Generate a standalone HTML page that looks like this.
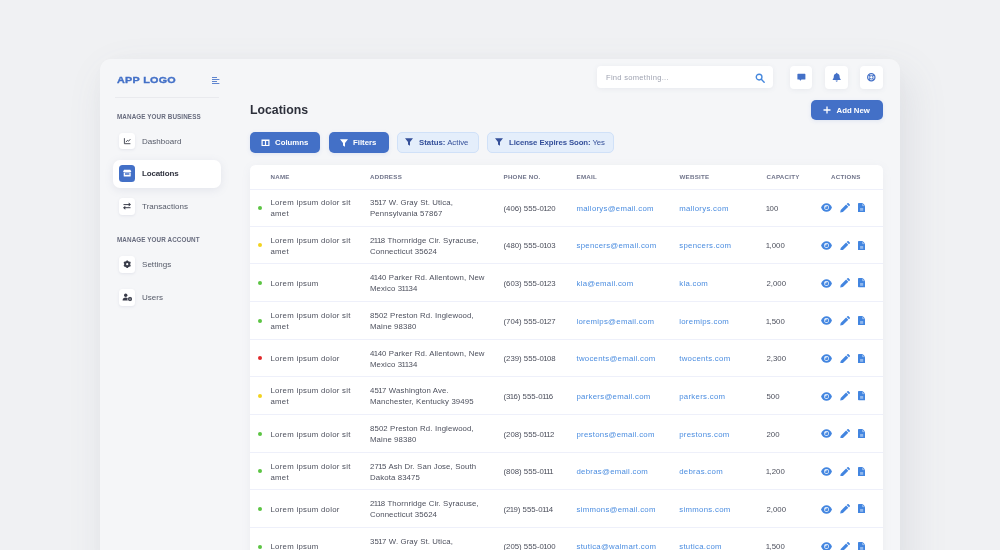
<!DOCTYPE html>
<html lang="en">
<head>
<meta charset="utf-8">
<title>Locations</title>
<style>
*{box-sizing:border-box;margin:0;padding:0}
html,body{width:1000px;height:550px;overflow:hidden}
body{background:#f0f1f3;font-family:"Liberation Sans",sans-serif;color:#3a3d4a;position:relative}
#root{position:absolute;left:0;top:0;width:1000px;height:550px;will-change:transform}
.k{margin:0 -.65px}
.app{position:absolute;left:100px;top:59px;width:800px;height:520px;background:#f5f6f8;border-radius:11px;box-shadow:8px 16px 40px rgba(100,110,135,.13),0 0 26px rgba(100,110,135,.022)}
/* sidebar */
.logo{position:absolute;left:117px;top:74px;font-weight:700;font-size:9.3px;line-height:12px;color:#4370c7;letter-spacing:.25px;white-space:nowrap;transform:scaleX(1.16);transform-origin:0 50%;-webkit-text-stroke:.35px #4370c7}
.burger{position:absolute;left:212px;top:77px;width:8px;height:8px}
.sdiv{position:absolute;left:115px;top:97px;width:104px;height:1px;background:#e9eaee}
.sec{position:absolute;left:117px;font-size:6.3px;font-weight:700;color:#686c7e;letter-spacing:.1px;line-height:8px;white-space:nowrap}
.nav{position:absolute;left:113px;width:108px;height:28px}
.nav.active{background:#fff;border-radius:7px;box-shadow:0 2px 8px rgba(120,130,160,.14)}
.nav .ib{position:absolute;left:5.8px;top:6px;width:16.4px;height:16.4px;border-radius:3.5px;background:#fff;box-shadow:0 1px 3px rgba(120,130,160,.14)}
.nav.active .ib{background:#4370c7;box-shadow:none;top:5.4px}
.nav .ib svg{position:absolute;left:0;top:0;width:16px;height:16px}
.nav .lb{position:absolute;left:29px;top:10px;letter-spacing:.04px;font-size:8px;line-height:10px;color:#555a68;white-space:nowrap}
.nav.active .lb{font-weight:700;color:#30333f;top:9px;letter-spacing:-.15px}
/* topbar */
.search{position:absolute;left:597.3px;top:66.2px;width:175.7px;height:22.3px;background:#fff;border-radius:4px;box-shadow:0 1px 5px rgba(120,130,160,.10)}
.search span{position:absolute;left:8.7px;top:6.6px;font-size:7.6px;line-height:10px;color:#a0a4b2;white-space:nowrap;letter-spacing:.27px}
.search svg{position:absolute;left:157.5px;top:6.5px;width:10.5px;height:10.5px}
.tb{position:absolute;top:66px;width:22px;height:22.5px;background:#fff;border-radius:4px;box-shadow:0 1px 5px rgba(120,130,160,.10)}
.tb svg{position:absolute;left:0;top:0;width:22px;height:23px}
h1{position:absolute;left:250px;top:102px;font-size:12.3px;line-height:16px;font-weight:700;color:#2d303b;white-space:nowrap}
.btn{position:absolute;height:20px;border-radius:5px;background:#4370c7;color:#fff;font-weight:700;font-size:7.8px;line-height:10px;white-space:nowrap;box-shadow:0 1px 4px rgba(63,108,195,.12)}
.btn span{position:absolute;top:6.4px}
.btn svg{position:absolute}
.chip{position:absolute;top:132px;height:20.7px;border-radius:5px;background:#e4eefb;border:1px solid #d0e1f8;color:#35509a;font-size:7.8px;line-height:10px;white-space:nowrap}
.chip span{position:absolute;top:4.5px}
.chip b{font-weight:700}
.chip svg{position:absolute}
/* table */
.card{position:absolute;left:250px;top:165px;width:633.2px;height:420px;background:#fff;border-radius:5.5px;box-shadow:0 2px 10px rgba(120,130,160,.08);overflow:hidden}
.th{position:absolute;top:7.7px;font-size:6.2px;line-height:8px;font-weight:700;color:#70748a;letter-spacing:.25px;white-space:nowrap}
.hl{position:absolute;left:0;width:633px;height:1px;background:#eef0fa}
.row{position:absolute;left:0;width:633px;height:37.67px;font-size:7.8px;line-height:11px;color:#4d505d}
.row .dot{position:absolute;left:8px;top:17.6px;width:4px;height:4px;border-radius:50%}
.g{background:#5bc443}.y{background:#f2d21f}.r{background:#e0292b}
.c{position:absolute;white-space:nowrap}
.c.one{top:14.5px}
.c.two{top:9px}
.c.a{color:#4b8de0}
.nm{letter-spacing:.27px}.ad{letter-spacing:.12px}.ph{letter-spacing:0}.em{letter-spacing:.27px}.wb{letter-spacing:.3px}
.row svg{position:absolute}
.eye{left:571px;top:15.3px;width:11px;height:9px}
.pen{left:589.8px;top:14.9px;width:10.2px;height:9.6px}
.doc{left:607.8px;top:14.9px;width:7.3px;height:9.3px}
</style>
</head>
<body>
<div id="root">
<div class="app"></div>

<!-- sidebar -->
<div class="logo">APP LOGO</div>
<svg class="burger" viewBox="0 0 8 8"><g stroke="#4370c7" stroke-width=".85" fill="none"><path d="M0 .5h5M0 2.500h7.400M0 4.500h5M0 6.500h7.400"/></g></svg>
<div class="sdiv"></div>
<div class="sec" style="top:112.6px">MANAGE YOUR BUSINESS</div>

<div class="nav" style="top:127px"><div class="ib"><svg viewBox="0 0 16 16"><path d="M5.400 5.200v5.500h6" stroke="#3a3d4a" stroke-width=".9" fill="none"/><path d="M6.900 9.100l1.500-1.700 1.200.8 1.700-2" stroke="#3a3d4a" stroke-width=".9" fill="none"/></svg></div><div class="lb">Dashboard</div></div>
<div class="nav active" style="top:160px"><div class="ib"><svg viewBox="0 0 16 16"><path d="M5 4.700h6.400l1 2.200H4z" fill="#fff"/><path d="M4.700 7.400h7v3.500a.6.600 0 0 1-.6.600H5.300a.6.600 0 0 1-.6-.6zM6 8.300v1.400h4.400V8.300z" fill="#fff" fill-rule="evenodd"/></svg></div><div class="lb">Locations</div></div>
<div class="nav" style="top:192.3px"><div class="ib"><svg viewBox="0 0 16 16"><g stroke="#3a3d4a" stroke-width="1" fill="none"><path d="M4.500 6.600h6M11.500 9.700h-6"/></g><path d="M9.700 4.600l2.300 2-2.300 2zM6.300 7.700l-2.300 2 2.300 2z" fill="#3a3d4a"/></svg></div><div class="lb">Transactions</div></div>

<div class="sec" style="top:236px">MANAGE YOUR ACCOUNT</div>
<div class="nav" style="top:250.2px"><div class="ib"><svg viewBox="0 0 16 16"><circle cx="8.200" cy="8.200" r="2.200" stroke="#3a3d4a" stroke-width="1.800" fill="none"/><g stroke="#3a3d4a" stroke-width="1.600"><path d="M8.200 4.400v7.600M4.900 6.300l6.600 3.800M4.900 10.100l6.600-3.800"/></g><circle cx="8.200" cy="8.200" r="1.100" fill="#fff"/></svg></div><div class="lb">Settings</div></div>
<div class="nav" style="top:283.4px"><div class="ib"><svg viewBox="0 0 16 16"><circle cx="6.700" cy="6.300" r="1.700" fill="#3a3d4a"/><path d="M3.600 11.400c0-1.900 1.300-2.800 3.100-2.800.9 0 1.600.2 2.100.7-.5.900-.4 1.600 0 2.100z" fill="#3a3d4a"/><circle cx="11" cy="10" r="1.350" stroke="#3a3d4a" stroke-width="1.300" fill="#fff"/><path d="M11 7.900v4.200M9.200 9l3.600 2M9.200 11l3.600-2" stroke="#3a3d4a" stroke-width=".7"/><circle cx="11" cy="10" r=".55" fill="#fff"/></svg></div><div class="lb">Users</div></div>

<!-- topbar -->
<div class="search"><span>Find something...</span><svg viewBox="0 0 11 11"><circle cx="4.300" cy="4.300" r="3" stroke="#4587dd" stroke-width="1.400" fill="none"/><path d="M6.600 6.600l3 3" stroke="#4587dd" stroke-width="1.500" stroke-linecap="round"/></svg></div>
<div class="tb" style="left:789.6px;width:22.7px"><svg viewBox="0 0 22 23"><path d="M8 7.800h6.800a.6.600 0 0 1 .6.600v4.600a.6.600 0 0 1-.6.600h-3.300l-1.200 1.200-.9-1.200H8a.6.600 0 0 1-.6-.6V8.400a.6.600 0 0 1 .6-.6z" fill="#4370c7"/></svg></div>
<div class="tb" style="left:824.8px;width:22.8px"><svg viewBox="0 0 22 23"><path d="M11.700 6.800c.4 0 .6.300.6.700 1.500.3 2.300 1.500 2.300 3 0 1.600.5 2.300 1 2.800.3.300.1.800-.3.800H8.100c-.4 0-.6-.5-.3-.8.500-.5 1-1.200 1-2.800 0-1.500.8-2.700 2.300-3 0-.4.200-.7.600-.7z" fill="#4370c7"/><path d="M10.600 14.600h2.200a1.100 1.100 0 0 1-2.200 0z" fill="#4370c7"/></svg></div>
<div class="tb" style="left:860.4px;width:22.6px"><svg viewBox="0 0 22 23"><circle cx="11.300" cy="11.300" r="3.650" stroke="#4370c7" stroke-width="1.200" fill="none"/><circle cx="11.300" cy="11.300" r="1.700" stroke="#4370c7" stroke-width=".9" fill="none"/><path d="M8.700 8.700l1.400 1.400M13.900 8.700l-1.400 1.400M8.700 13.900l1.400-1.400M13.900 13.900l-1.400-1.400" stroke="#4370c7" stroke-width="1.300"/></svg></div>

<h1>Locations</h1>
<div class="btn" style="left:811px;top:100px;width:72px"><svg style="left:12px;top:6px;width:8px;height:8px" viewBox="0 0 8 8"><path d="M4 .5v7M.5 4h7" stroke="#fff" stroke-width="1.300"/></svg><span style="left:25.500px;top:6.3px">Add New</span></div>

<div class="btn" style="left:250px;top:132px;width:70px;height:20.7px"><svg style="left:11px;top:6.5px;width:9px;height:7.5px" viewBox="0 0 9 8" preserveAspectRatio="none"><path d="M.5.500h8v7h-8zM1.700 2v4.300h2.200V2zM5.100 2v4.300h2.200V2z" fill="#fff" fill-rule="evenodd"/></svg><span style="left:25px">Columns</span></div>
<div class="btn" style="left:329px;top:132px;width:59.500px;height:20.7px"><svg style="left:11px;top:6.700px;width:8px;height:8px" viewBox="0 0 8 8"><path d="M0 .3h8L5 4v3.700L3 6.500V4z" fill="#fff"/></svg><span style="left:24px">Filters</span></div>
<div class="chip" style="left:397px;width:82px"><svg style="left:7px;top:5px;width:8px;height:8px" viewBox="0 0 8 8"><path d="M0 .3h8L5 4v3.700L3 6.500V4z" fill="#35509a"/></svg><span style="left:21px"><b>Status:</b> Active</span></div>
<div class="chip" style="left:487px;width:127px"><svg style="left:7px;top:5px;width:8px;height:8px" viewBox="0 0 8 8"><path d="M0 .3h8L5 4v3.700L3 6.500V4z" fill="#35509a"/></svg><span style="left:21px;letter-spacing:-.1px"><b>License Expires Soon:</b> Yes</span></div>

<!-- table -->
<div class="card" id="card">
<div class="th" style="left:20.500px">NAME</div>
<div class="th" style="left:120px">ADDRESS</div>
<div class="th" style="left:253.500px">PHONE NO.</div>
<div class="th" style="left:326.500px">EMAIL</div>
<div class="th" style="left:429.500px">WEBSITE</div>
<div class="th" style="left:516.500px">CAPACITY</div>
<div class="th" style="left:581px">ACTIONS</div>
<div class="hl" style="top:24.00px"></div>
<div class="row" style="top:23.10px"><i class="dot g"></i><div class="c nm two" style="left:20.5px">Lorem ipsum dolor sit<br>amet</div><div class="c ad two" style="left:120px">35<span class="k">1</span>7 W. Gray St. Utica,<br>Pennsylvania 57867</div><div class="c ph one" style="left:253.5px">(406) 555-0<span class="k">1</span>20</div><div class="c a em one" style="left:326.5px">mallorys@email.com</div><div class="c a wb one" style="left:429.2px">mallorys.com</div><div class="c cp one" style="left:516.5px"><span class="k">1</span>00</div><svg class="eye" viewBox="0 0 11 9"><path d="M5.500.15C3 .15 1 1.900.05 4.500 1 7.100 3 8.850 5.500 8.850S10 7.100 10.950 4.500C10 1.900 8 .15 5.500.15z" fill="#4285e0"/><circle cx="5.500" cy="4.500" r="2.450" fill="#fff"/><circle cx="5.500" cy="4.500" r="1.750" fill="#4285e0"/><circle cx="4.850" cy="3.800" r=".8" fill="#fff"/></svg><svg class="pen" viewBox="0 0 10.200 9.600"><path d="M.2 9.500l.5-2.600 5.400-5.400 2.200 2.200-5.400 5.400zM6.700 1l.8-.8c.3-.3.800-.3 1.100 0l1.200 1.200c.3.300.3.800 0 1.100l-.8.800z" fill="#4285e0"/></svg><svg class="doc" viewBox="0 0 7.300 9.300"><path d="M.8 0h3.800l2.700 2.700v5.800a.8.800 0 0 1-.8.800H.8a.8.800 0 0 1-.8-.8V.8A.8.800 0 0 1 .8 0z" fill="#4285e0"/><path d="M4.650.5v2.150H6.800" stroke="#fff" stroke-width=".55" fill="none" opacity=".85"/><rect x="2.100" y="5" width="3.100" height="2.800" fill="#fff" opacity=".42"/></svg></div>
<div class="hl" style="top:60.75px"></div>
<div class="row" style="top:60.75px"><i class="dot y"></i><div class="c nm two" style="left:20.5px">Lorem ipsum dolor sit<br>amet</div><div class="c ad two" style="left:120px">2<span class="k">1</span><span class="k">1</span>8 Thornridge Cir. Syracuse,<br>Connecticut 35624</div><div class="c ph one" style="left:253.5px">(480) 555-0<span class="k">1</span>03</div><div class="c a em one" style="left:326.5px">spencers@email.com</div><div class="c a wb one" style="left:429.2px">spencers.com</div><div class="c cp one" style="left:516.5px"><span class="k">1</span>,000</div><svg class="eye" viewBox="0 0 11 9"><path d="M5.500.15C3 .15 1 1.900.05 4.500 1 7.100 3 8.850 5.500 8.850S10 7.100 10.950 4.500C10 1.900 8 .15 5.500.15z" fill="#4285e0"/><circle cx="5.500" cy="4.500" r="2.450" fill="#fff"/><circle cx="5.500" cy="4.500" r="1.750" fill="#4285e0"/><circle cx="4.850" cy="3.800" r=".8" fill="#fff"/></svg><svg class="pen" viewBox="0 0 10.200 9.600"><path d="M.2 9.500l.5-2.600 5.400-5.400 2.200 2.200-5.400 5.400zM6.700 1l.8-.8c.3-.3.800-.3 1.100 0l1.200 1.200c.3.300.3.800 0 1.100l-.8.800z" fill="#4285e0"/></svg><svg class="doc" viewBox="0 0 7.300 9.300"><path d="M.8 0h3.800l2.700 2.700v5.800a.8.800 0 0 1-.8.800H.8a.8.800 0 0 1-.8-.8V.8A.8.800 0 0 1 .8 0z" fill="#4285e0"/><path d="M4.650.5v2.150H6.800" stroke="#fff" stroke-width=".55" fill="none" opacity=".85"/><rect x="2.100" y="5" width="3.100" height="2.800" fill="#fff" opacity=".42"/></svg></div>
<div class="hl" style="top:98.40px"></div>
<div class="row" style="top:98.40px"><i class="dot g"></i><div class="c nm one" style="left:20.5px">Lorem ipsum</div><div class="c ad two" style="left:120px">4<span class="k">1</span>40 Parker Rd. Allentown, New<br>Mexico 3<span class="k">1</span><span class="k">1</span>34</div><div class="c ph one" style="left:253.5px">(603) 555-0<span class="k">1</span>23</div><div class="c a em one" style="left:326.5px">kla@email.com</div><div class="c a wb one" style="left:429.2px">kla.com</div><div class="c cp one" style="left:516.5px">2,000</div><svg class="eye" viewBox="0 0 11 9"><path d="M5.500.15C3 .15 1 1.900.05 4.500 1 7.100 3 8.850 5.500 8.850S10 7.100 10.950 4.500C10 1.900 8 .15 5.500.15z" fill="#4285e0"/><circle cx="5.500" cy="4.500" r="2.450" fill="#fff"/><circle cx="5.500" cy="4.500" r="1.750" fill="#4285e0"/><circle cx="4.850" cy="3.800" r=".8" fill="#fff"/></svg><svg class="pen" viewBox="0 0 10.200 9.600"><path d="M.2 9.500l.5-2.600 5.400-5.400 2.200 2.200-5.400 5.400zM6.700 1l.8-.8c.3-.3.800-.3 1.100 0l1.200 1.200c.3.300.3.800 0 1.100l-.8.800z" fill="#4285e0"/></svg><svg class="doc" viewBox="0 0 7.300 9.300"><path d="M.8 0h3.800l2.700 2.700v5.800a.8.800 0 0 1-.8.800H.8a.8.800 0 0 1-.8-.8V.8A.8.800 0 0 1 .8 0z" fill="#4285e0"/><path d="M4.650.5v2.150H6.800" stroke="#fff" stroke-width=".55" fill="none" opacity=".85"/><rect x="2.100" y="5" width="3.100" height="2.800" fill="#fff" opacity=".42"/></svg></div>
<div class="hl" style="top:136.05px"></div>
<div class="row" style="top:136.05px"><i class="dot g"></i><div class="c nm two" style="left:20.5px">Lorem ipsum dolor sit<br>amet</div><div class="c ad two" style="left:120px">8502 Preston Rd. Inglewood,<br>Maine 98380</div><div class="c ph one" style="left:253.5px">(704) 555-0<span class="k">1</span>27</div><div class="c a em one" style="left:326.5px">loremips@email.com</div><div class="c a wb one" style="left:429.2px">loremips.com</div><div class="c cp one" style="left:516.5px"><span class="k">1</span>,500</div><svg class="eye" viewBox="0 0 11 9"><path d="M5.500.15C3 .15 1 1.900.05 4.500 1 7.100 3 8.850 5.500 8.850S10 7.100 10.950 4.500C10 1.900 8 .15 5.500.15z" fill="#4285e0"/><circle cx="5.500" cy="4.500" r="2.450" fill="#fff"/><circle cx="5.500" cy="4.500" r="1.750" fill="#4285e0"/><circle cx="4.850" cy="3.800" r=".8" fill="#fff"/></svg><svg class="pen" viewBox="0 0 10.200 9.600"><path d="M.2 9.500l.5-2.600 5.400-5.400 2.200 2.200-5.400 5.400zM6.700 1l.8-.8c.3-.3.800-.3 1.100 0l1.200 1.200c.3.300.3.800 0 1.100l-.8.800z" fill="#4285e0"/></svg><svg class="doc" viewBox="0 0 7.300 9.300"><path d="M.8 0h3.800l2.700 2.700v5.800a.8.800 0 0 1-.8.800H.8a.8.800 0 0 1-.8-.8V.8A.8.800 0 0 1 .8 0z" fill="#4285e0"/><path d="M4.650.5v2.150H6.800" stroke="#fff" stroke-width=".55" fill="none" opacity=".85"/><rect x="2.100" y="5" width="3.100" height="2.800" fill="#fff" opacity=".42"/></svg></div>
<div class="hl" style="top:173.70px"></div>
<div class="row" style="top:173.70px"><i class="dot r"></i><div class="c nm one" style="left:20.5px">Lorem ipsum dolor</div><div class="c ad two" style="left:120px">4<span class="k">1</span>40 Parker Rd. Allentown, New<br>Mexico 3<span class="k">1</span><span class="k">1</span>34</div><div class="c ph one" style="left:253.5px">(239) 555-0<span class="k">1</span>08</div><div class="c a em one" style="left:326.5px">twocents@email.com</div><div class="c a wb one" style="left:429.2px">twocents.com</div><div class="c cp one" style="left:516.5px">2,300</div><svg class="eye" viewBox="0 0 11 9"><path d="M5.500.15C3 .15 1 1.900.05 4.500 1 7.100 3 8.850 5.500 8.850S10 7.100 10.950 4.500C10 1.900 8 .15 5.500.15z" fill="#4285e0"/><circle cx="5.500" cy="4.500" r="2.450" fill="#fff"/><circle cx="5.500" cy="4.500" r="1.750" fill="#4285e0"/><circle cx="4.850" cy="3.800" r=".8" fill="#fff"/></svg><svg class="pen" viewBox="0 0 10.200 9.600"><path d="M.2 9.500l.5-2.600 5.400-5.400 2.200 2.200-5.400 5.400zM6.700 1l.8-.8c.3-.3.800-.3 1.100 0l1.200 1.200c.3.300.3.800 0 1.100l-.8.800z" fill="#4285e0"/></svg><svg class="doc" viewBox="0 0 7.300 9.300"><path d="M.8 0h3.800l2.700 2.700v5.800a.8.800 0 0 1-.8.800H.8a.8.800 0 0 1-.8-.8V.8A.8.800 0 0 1 .8 0z" fill="#4285e0"/><path d="M4.650.5v2.150H6.800" stroke="#fff" stroke-width=".55" fill="none" opacity=".85"/><rect x="2.100" y="5" width="3.100" height="2.800" fill="#fff" opacity=".42"/></svg></div>
<div class="hl" style="top:211.35px"></div>
<div class="row" style="top:211.35px"><i class="dot y"></i><div class="c nm two" style="left:20.5px">Lorem ipsum dolor sit<br>amet</div><div class="c ad two" style="left:120px">45<span class="k">1</span>7 Washington Ave.<br>Manchester, Kentucky 39495</div><div class="c ph one" style="left:253.5px">(3<span class="k">1</span>6) 555-0<span class="k">1</span><span class="k">1</span>6</div><div class="c a em one" style="left:326.5px">parkers@email.com</div><div class="c a wb one" style="left:429.2px">parkers.com</div><div class="c cp one" style="left:516.5px">500</div><svg class="eye" viewBox="0 0 11 9"><path d="M5.500.15C3 .15 1 1.900.05 4.500 1 7.100 3 8.850 5.500 8.850S10 7.100 10.950 4.500C10 1.900 8 .15 5.500.15z" fill="#4285e0"/><circle cx="5.500" cy="4.500" r="2.450" fill="#fff"/><circle cx="5.500" cy="4.500" r="1.750" fill="#4285e0"/><circle cx="4.850" cy="3.800" r=".8" fill="#fff"/></svg><svg class="pen" viewBox="0 0 10.200 9.600"><path d="M.2 9.500l.5-2.600 5.400-5.400 2.200 2.200-5.400 5.400zM6.700 1l.8-.8c.3-.3.800-.3 1.100 0l1.200 1.200c.3.300.3.800 0 1.100l-.8.800z" fill="#4285e0"/></svg><svg class="doc" viewBox="0 0 7.300 9.300"><path d="M.8 0h3.800l2.700 2.700v5.800a.8.800 0 0 1-.8.800H.8a.8.800 0 0 1-.8-.8V.8A.8.800 0 0 1 .8 0z" fill="#4285e0"/><path d="M4.650.5v2.150H6.800" stroke="#fff" stroke-width=".55" fill="none" opacity=".85"/><rect x="2.100" y="5" width="3.100" height="2.800" fill="#fff" opacity=".42"/></svg></div>
<div class="hl" style="top:249.00px"></div>
<div class="row" style="top:249.00px"><i class="dot g"></i><div class="c nm one" style="left:20.5px">Lorem ipsum dolor sit</div><div class="c ad two" style="left:120px">8502 Preston Rd. Inglewood,<br>Maine 98380</div><div class="c ph one" style="left:253.5px">(208) 555-0<span class="k">1</span><span class="k">1</span>2</div><div class="c a em one" style="left:326.5px">prestons@email.com</div><div class="c a wb one" style="left:429.2px">prestons.com</div><div class="c cp one" style="left:516.5px">200</div><svg class="eye" viewBox="0 0 11 9"><path d="M5.500.15C3 .15 1 1.900.05 4.500 1 7.100 3 8.850 5.500 8.850S10 7.100 10.950 4.500C10 1.900 8 .15 5.500.15z" fill="#4285e0"/><circle cx="5.500" cy="4.500" r="2.450" fill="#fff"/><circle cx="5.500" cy="4.500" r="1.750" fill="#4285e0"/><circle cx="4.850" cy="3.800" r=".8" fill="#fff"/></svg><svg class="pen" viewBox="0 0 10.200 9.600"><path d="M.2 9.500l.5-2.600 5.400-5.400 2.200 2.200-5.400 5.400zM6.700 1l.8-.8c.3-.3.800-.3 1.100 0l1.200 1.200c.3.300.3.800 0 1.100l-.8.800z" fill="#4285e0"/></svg><svg class="doc" viewBox="0 0 7.300 9.300"><path d="M.8 0h3.800l2.700 2.700v5.800a.8.800 0 0 1-.8.800H.8a.8.800 0 0 1-.8-.8V.8A.8.800 0 0 1 .8 0z" fill="#4285e0"/><path d="M4.650.5v2.150H6.800" stroke="#fff" stroke-width=".55" fill="none" opacity=".85"/><rect x="2.100" y="5" width="3.100" height="2.800" fill="#fff" opacity=".42"/></svg></div>
<div class="hl" style="top:286.65px"></div>
<div class="row" style="top:286.65px"><i class="dot g"></i><div class="c nm two" style="left:20.5px">Lorem ipsum dolor sit<br>amet</div><div class="c ad two" style="left:120px">27<span class="k">1</span>5 Ash Dr. San Jose, South<br>Dakota 83475</div><div class="c ph one" style="left:253.5px">(808) 555-0<span class="k">1</span><span class="k">1</span><span class="k">1</span></div><div class="c a em one" style="left:326.5px">debras@email.com</div><div class="c a wb one" style="left:429.2px">debras.com</div><div class="c cp one" style="left:516.5px"><span class="k">1</span>,200</div><svg class="eye" viewBox="0 0 11 9"><path d="M5.500.15C3 .15 1 1.900.05 4.500 1 7.100 3 8.850 5.500 8.850S10 7.100 10.950 4.500C10 1.900 8 .15 5.500.15z" fill="#4285e0"/><circle cx="5.500" cy="4.500" r="2.450" fill="#fff"/><circle cx="5.500" cy="4.500" r="1.750" fill="#4285e0"/><circle cx="4.850" cy="3.800" r=".8" fill="#fff"/></svg><svg class="pen" viewBox="0 0 10.200 9.600"><path d="M.2 9.500l.5-2.600 5.400-5.400 2.200 2.200-5.400 5.400zM6.700 1l.8-.8c.3-.3.800-.3 1.100 0l1.200 1.200c.3.300.3.800 0 1.100l-.8.800z" fill="#4285e0"/></svg><svg class="doc" viewBox="0 0 7.300 9.300"><path d="M.8 0h3.800l2.700 2.700v5.800a.8.800 0 0 1-.8.800H.8a.8.800 0 0 1-.8-.8V.8A.8.800 0 0 1 .8 0z" fill="#4285e0"/><path d="M4.650.5v2.150H6.800" stroke="#fff" stroke-width=".55" fill="none" opacity=".85"/><rect x="2.100" y="5" width="3.100" height="2.800" fill="#fff" opacity=".42"/></svg></div>
<div class="hl" style="top:324.30px"></div>
<div class="row" style="top:324.30px"><i class="dot g"></i><div class="c nm one" style="left:20.5px">Lorem ipsum dolor</div><div class="c ad two" style="left:120px">2<span class="k">1</span><span class="k">1</span>8 Thornridge Cir. Syracuse,<br>Connecticut 35624</div><div class="c ph one" style="left:253.5px">(2<span class="k">1</span>9) 555-0<span class="k">1</span><span class="k">1</span>4</div><div class="c a em one" style="left:326.5px">simmons@email.com</div><div class="c a wb one" style="left:429.2px">simmons.com</div><div class="c cp one" style="left:516.5px">2,000</div><svg class="eye" viewBox="0 0 11 9"><path d="M5.500.15C3 .15 1 1.900.05 4.500 1 7.100 3 8.850 5.500 8.850S10 7.100 10.950 4.500C10 1.900 8 .15 5.500.15z" fill="#4285e0"/><circle cx="5.500" cy="4.500" r="2.450" fill="#fff"/><circle cx="5.500" cy="4.500" r="1.750" fill="#4285e0"/><circle cx="4.850" cy="3.800" r=".8" fill="#fff"/></svg><svg class="pen" viewBox="0 0 10.200 9.600"><path d="M.2 9.500l.5-2.600 5.400-5.400 2.200 2.200-5.400 5.400zM6.700 1l.8-.8c.3-.3.800-.3 1.100 0l1.200 1.200c.3.300.3.800 0 1.100l-.8.800z" fill="#4285e0"/></svg><svg class="doc" viewBox="0 0 7.300 9.300"><path d="M.8 0h3.800l2.700 2.700v5.800a.8.800 0 0 1-.8.800H.8a.8.800 0 0 1-.8-.8V.8A.8.800 0 0 1 .8 0z" fill="#4285e0"/><path d="M4.650.5v2.150H6.800" stroke="#fff" stroke-width=".55" fill="none" opacity=".85"/><rect x="2.100" y="5" width="3.100" height="2.800" fill="#fff" opacity=".42"/></svg></div>
<div class="hl" style="top:361.95px"></div>
<div class="row" style="top:361.95px"><i class="dot g"></i><div class="c nm one" style="left:20.5px">Lorem ipsum</div><div class="c ad two" style="left:120px">35<span class="k">1</span>7 W. Gray St. Utica,<br>Pennsylvania 57867</div><div class="c ph one" style="left:253.5px">(205) 555-0<span class="k">1</span>00</div><div class="c a em one" style="left:326.5px">stutica@walmart.com</div><div class="c a wb one" style="left:429.2px">stutica.com</div><div class="c cp one" style="left:516.5px"><span class="k">1</span>,500</div><svg class="eye" viewBox="0 0 11 9"><path d="M5.500.15C3 .15 1 1.900.05 4.500 1 7.100 3 8.850 5.500 8.850S10 7.100 10.950 4.500C10 1.900 8 .15 5.500.15z" fill="#4285e0"/><circle cx="5.500" cy="4.500" r="2.450" fill="#fff"/><circle cx="5.500" cy="4.500" r="1.750" fill="#4285e0"/><circle cx="4.850" cy="3.800" r=".8" fill="#fff"/></svg><svg class="pen" viewBox="0 0 10.200 9.600"><path d="M.2 9.500l.5-2.600 5.400-5.400 2.200 2.200-5.400 5.400zM6.700 1l.8-.8c.3-.3.800-.3 1.100 0l1.200 1.200c.3.300.3.800 0 1.100l-.8.800z" fill="#4285e0"/></svg><svg class="doc" viewBox="0 0 7.300 9.300"><path d="M.8 0h3.800l2.700 2.700v5.800a.8.800 0 0 1-.8.800H.8a.8.800 0 0 1-.8-.8V.8A.8.800 0 0 1 .8 0z" fill="#4285e0"/><path d="M4.650.5v2.150H6.800" stroke="#fff" stroke-width=".55" fill="none" opacity=".85"/><rect x="2.100" y="5" width="3.100" height="2.800" fill="#fff" opacity=".42"/></svg></div>
</div>
</div>
</body>
</html>
